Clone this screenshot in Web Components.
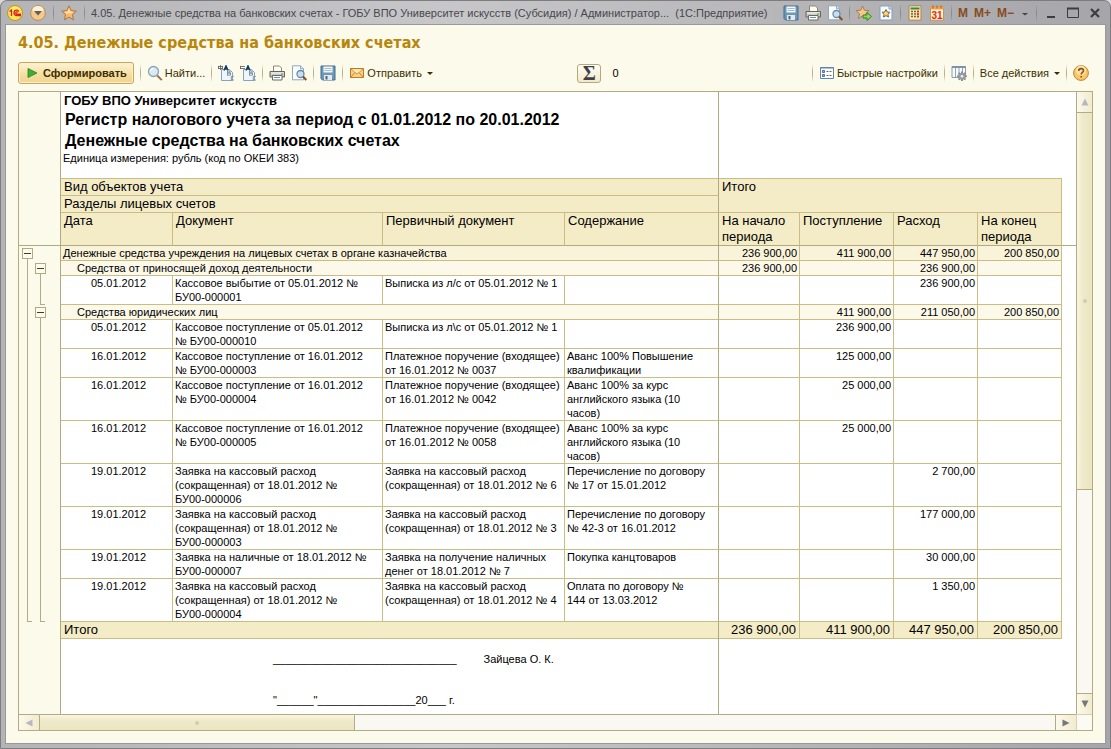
<!DOCTYPE html>
<html lang="ru">
<head>
<meta charset="utf-8">
<title>4.05. Денежные средства на банковских счетах</title>
<style>
  html, body { margin: 0; min-height: 100%; }
  body { background: #d8d8d8; font-family: "Liberation Sans", Arial, sans-serif; font-size: 11px; color: #000; }
</style>
</head>
<body>
<app-window>
  <title-bar slot="title">4.05. Денежные средства на банковских счетах - ГОБУ ВПО Университет искусств (Субсидия) / Администратор...&nbsp; (1С:Предприятие)</title-bar>
  <report-heading>4.05. Денежные средства на банковских счетах</report-heading>
  <report-toolbar></report-toolbar>
  <report-sheet></report-sheet>
</app-window>

<script>
const define = (name, html, setup) => {
  const template = document.createElement('template');
  template.innerHTML = html;
  customElements.define(name, class extends HTMLElement {
    constructor() {
      super();
      this.attachShadow({ mode: 'open' }).append(template.content.cloneNode(true));
    }
    connectedCallback() {
      if (setup && !this.ready) { this.ready = true; setup(this, this.shadowRoot); }
    }
  });
};

/* Icons, each on a 16 x 16 grid */
const ICONS = {
  logo: '<circle cx="8" cy="8" r="7.5" fill="#ffe34d" stroke="#c8921e"/><circle cx="8" cy="7" r="5.5" fill="#fff27a" opacity=".7"/><path d="M2.5 6.5L4.5 5v6M12 6.5C11 4.500 7 4.600 7 8c0 2 1.500 2.500 3 2.500h4M11 7.400c-.8-1-2.300-.6-2.300.7 0 .8.6 1 1.300 1h4" fill="none" stroke="#d8201c" stroke-width="1.300"/>',
  menu: '<circle cx="8" cy="8" r="7.400" fill="#f5c98a" stroke="#b98b5c"/><ellipse cx="8" cy="4.500" rx="5.500" ry="3.500" fill="#fff1d4"/><path d="M4 6h8l-4 4.500z" fill="#5d5d62"/>',
  star: '<path d="M8 .8l2.100 4.800 5.200.5-3.900 3.500 1.100 5.200L8 12.100l-4.500 2.700 1.100-5.200L.7 6.100l5.200-.5z" fill="#fbb86a" stroke="#a9764c"/><path d="M8 3l1.300 3.500 3 .3-2.300 2L8 8 5 9 4 6.800l2.700-.3z" fill="#ffe0a0"/>',
  save: '<path d="M1 1h14v14H2.500L1 13.500z" fill="#6f98b5" stroke="#436d8d"/><path d="M3.500 1.500h9v6h-9z" fill="#f4f8fa"/><path d="M4.500 3.500h7M4.500 5.500h7" stroke="#a9bccb"/><path d="M4 10h8v5H4z" fill="#e3e9ed"/><path d="M5.500 11h2v3.500h-2z" fill="#3f6884"/>',
  print: '<path d="M4.500 1h6l2 2v4h-8z" fill="#fffdf2" stroke="#8d8979"/><path d="M1 6.500h14.500v5.500H1z" fill="#c9c8bd" stroke="#66645f"/><path d="M2 8h12.500" stroke="#fff"/><path d="M3.500 10.500h9.500v4.500H3.500z" fill="#fff" stroke="#6c6a64"/><path d="M5 12.500h6" stroke="#5f92c8"/><path d="M12 8.500h2v1h-2z" fill="#48a03c"/>',
  preview: '<path d="M1.500.8h8l3 3v11h-11z" fill="#fbfdff" stroke="#8ba9c4"/><path d="M9.500.8v3h3" fill="#dbe7f2" stroke="#8ba9c4"/><circle cx="9.500" cy="9" r="3.500" fill="#c7dff0" stroke="#6b89a5" stroke-width="1.300"/><path d="M12 11.500l3.300 3.500" stroke="#8a4d20" stroke-width="2"/>',
  staradd: '<path d="M6.500 1l1.900 4.200 4.500.5-3.400 3.100 1 4.600-4-2.400-4 2.400 1-4.600L.2 5.700l4.500-.5z" fill="#f9c78a" stroke="#a67a58"/><path d="M7 10h4V7.500l4.500 4-4.500 4V13H7z" fill="#8edb51" stroke="#33852a"/>',
  docstar: '<path d="M2 1h9.500L14 3.500V15H2z" fill="#f7faff" stroke="#7fa0c4"/><path d="M11 1v3h3" fill="#dfe8f3" stroke="#7fa0c4"/><path d="M8 4.500l1.200 2.500 2.800.3-2.100 2 .6 2.700L8 10.600 5.500 12l.6-2.700-2.100-2 2.800-.3z" fill="#ffd873" stroke="#83603c"/>',
  calc: '<path d="M2 .8h12v14.400H2z" fill="#fbe6b4" stroke="#a88853"/><path d="M3.500 2.500h9v2h-9z" fill="#338c38"/><path d="M4 6.500h2m1 0h2m1 0h2M4 9h2m1 0h2m1 0h2M4 11.500h2m1 0h2m1 0h2" stroke="#7c6640" stroke-width="1.300"/><path d="M10 6.500h2m-2 2.500h2m-2 2.500h2" stroke="#d33a26" stroke-width="1.300"/>',
  calendar: '<path d="M1.500 1.500h13v13.700h-13z" fill="#fff4d2" stroke="#c9924e"/><path d="M1.500 1.500h13v3h-13z" fill="#eba55a"/><path d="M4 .5v3M8 .5v3M12 .5v3" stroke="#9d633b"/><text x="8" y="13.500" font-size="10" text-anchor="middle" font-family="Liberation Sans, sans-serif" fill="#e02a16">31</text>',
  down: '<path d="M3 8h10L8 12z" fill="#454545"/>',
  min: '<path d="M4 11h8v2H4z" fill="#3d3d3d"/>',
  max: '<path d="M2.500 3.500h11v9h-11z" fill="none" stroke="#3d3d3d"/><path d="M2 3.500h12" stroke="#3d3d3d" stroke-width="2"/>',
  close: '<path d="M4 4l8 8M12 4l-8 8" stroke="#3d3d3d" stroke-width="2.200"/>',
  play: '<path d="M3 3.500L12 8l-9 4.500z" fill="#3fae32" stroke="#27801f" stroke-width=".8"/>',
  find: '<circle cx="6.500" cy="6.500" r="5" fill="#d5e9f7" stroke="#8fa2b3" stroke-width="1.300"/><path d="M3.500 6c.4-1.500 1.500-2.300 3-2.300" stroke="#fff" fill="none" stroke-width="1.300"/><path d="M10.200 10.500l4.600 4.600" stroke="#a0714c" stroke-width="2"/>',
  expand: '<path d="M3.500 4.500h8l3 3v8h-11z" fill="#eef6fc" stroke="#86a2bd"/><path d="M0 1.500h5M0 3.500h5M.5 1v3M2.500 0v5M4.500 1v3" stroke="#5a5a5a" stroke-width=".8"/><path d="M6 5.500L8 .8l2 4.700M6.800 3.800h2.400" fill="none" stroke="#123c62" stroke-width="1.400"/><path d="M9.500 5.500v5m0-4.500h2.500v2H9.500m0 0h3v2.200h-3M15.800 11.500h-2.500v3.500h2.500" fill="none" stroke="#7f93a6"/>',
  collapse: '<path d="M3.500 4.500h8l3 3v8h-11z" fill="#eef6fc" stroke="#86a2bd"/><path d="M0 1.500h5M0 3.500h5M.5 1v3" stroke="#5a5a5a" stroke-width=".8"/><path d="M6 5.500L8 .8l2 4.700M6.800 3.800h2.400" fill="none" stroke="#123c62" stroke-width="1.400"/><path d="M9.500 5.500v5m0-4.500h2.500v2H9.500m0 0h3v2.200h-3M15.800 11.500h-2.500v3.500h2.500" fill="none" stroke="#7f93a6"/>',
  mail: '<path d="M1.500 3.500h13v9h-13z" fill="#fbd080" stroke="#bd7a2a"/><path d="M1.500 3.500L8 9l6.500-5.500M1.500 12.500l4.500-5M14.500 12.500l-4.500-5" fill="none" stroke="#c8842f"/><path d="M3 4.500h10L8 8.400z" fill="#fff0bd"/>',
  settings: '<path d="M1.500 2.500h13v11h-13z" fill="#fff" stroke="#6283ac"/><path d="M1 3h14" stroke="#6283ac"/><path d="M3.500 5.500h2v2h-2zM3.500 9.500h2v2h-2z" fill="#95b5dc" stroke="#4e6d98"/><path d="M7.500 6.500h2m1 0h2m-5 4h2m1 0h2" stroke="#5a6576"/>',
  gear: '<path d="M1 1.500h13.500v11H1z" fill="#f7fafc" stroke="#8b9cad"/><path d="M1 2h13.500" stroke="#7d93a7" stroke-width="2"/><path d="M4.500 3v9M8 3v9M11.500 3v9" stroke="#8fa5b8"/><path d="M11 6.500v9.500M6.200 11.200h9.600M7.600 7.900l6.800 6.700M14.400 7.900l-6.800 6.700" stroke="#7e8389" stroke-width="1.800"/><circle cx="11" cy="11.200" r="3.500" fill="#979ca2"/><circle cx="11" cy="11.200" r="1.300" fill="#f4f3e6"/>',
  help: '<circle cx="8" cy="8" r="7.400" fill="#fcc566" stroke="#b7863f"/><circle cx="8" cy="5.500" r="5" fill="#ffe9b5" opacity=".8"/><path d="M5.700 6c0-1.500 1-2.400 2.400-2.400s2.400.9 2.400 2.100c0 1.700-2.300 1.700-2.300 3.800M8.200 11v1.600" fill="none" stroke="#8b521c" stroke-width="1.600"/>'
};

define('tool-icon', `
  <style>
    :host { display: block; flex: none; width: 16px; height: 16px; }
    svg { display: block; width: 100%; height: 100%; }
  </style>
  <svg viewBox="0 0 16 16" aria-hidden="true"></svg>`,
  (el, root) => { root.querySelector('svg').innerHTML = ICONS[el.getAttribute('name')]; });

define('tool-separator', `
  <style>
    :host { display: block; flex: none; width: 1px; height: 18px;
      background: linear-gradient(transparent, var(--separator, #b9b28f) 40%, var(--separator, #b9b28f) 60%, transparent); }
  </style>`);

define('app-window', `
  <style>
    :host { display: flex; flex-direction: column; box-sizing: border-box; min-height: 100vh;
      padding: 0 5px 5px; border: 1px solid #7d7d7f; border-radius: 7px 7px 0 0;
      background: linear-gradient(90deg, #b4b4b6, #c7c7c9 40%, #a6a6aa); }
    main { flex: 1; display: flex; flex-direction: column; min-width: 0;
      padding: 0 12px 12px; background: #fcfaeb; box-shadow: 0 0 0 1px #99999b; }
  </style>
  <slot name="title"></slot>
  <main><slot></slot></main>`);

define('title-bar', `
  <style>
    :host { display: flex; align-items: center; height: 24px; padding: 0 2px 0 1px; color: #47474b; --separator: #8c8c90; }
    .group { display: flex; align-items: center; flex: none; gap: 6px; }
    .lead { gap: 7px; }
    .text { flex: 1; min-width: 0; margin: 0 8px 0 6px; font: 11px/16px "Liberation Sans", sans-serif; white-space: nowrap; overflow: hidden; }
    button { display: block; flex: none; padding: 0; border: 0; background: none; color: #884a20; font: bold 12px/16px "Liberation Sans", sans-serif; }
    .more, .more tool-icon { width: 10px; }
  </style>
  <div class="group lead">
    <button aria-label="Меню 1С"><tool-icon name="logo"></tool-icon></button>
    <button aria-label="Главное меню"><tool-icon name="menu"></tool-icon></button>
    <tool-separator></tool-separator>
    <button aria-label="Избранное"><tool-icon name="star"></tool-icon></button>
    <tool-separator></tool-separator>
  </div>
  <div class="text"><slot></slot></div>
  <div class="group">
    <button aria-label="Сохранить"><tool-icon name="save"></tool-icon></button>
    <button aria-label="Печать"><tool-icon name="print"></tool-icon></button>
    <button aria-label="Просмотр"><tool-icon name="preview"></tool-icon></button>
    <tool-separator></tool-separator>
    <button aria-label="Добавить в избранное"><tool-icon name="staradd"></tool-icon></button>
    <button aria-label="Получить ссылку"><tool-icon name="docstar"></tool-icon></button>
    <tool-separator></tool-separator>
    <button aria-label="Калькулятор"><tool-icon name="calc"></tool-icon></button>
    <button aria-label="Календарь"><tool-icon name="calendar"></tool-icon></button>
    <tool-separator></tool-separator>
    <button>M</button>
    <button>M+</button>
    <button>M−</button>
    <button class="more" aria-label="Ещё"><tool-icon name="down"></tool-icon></button>
    <tool-separator></tool-separator>
    <button aria-label="Свернуть"><tool-icon name="min"></tool-icon></button>
    <button aria-label="Развернуть"><tool-icon name="max"></tool-icon></button>
    <button aria-label="Закрыть"><tool-icon name="close"></tool-icon></button>
  </div>`);

define('report-heading', `
  <style>
    :host { display: block; padding: 6px 0 7px; }
    h1 { margin: 0; font: bold 16px/24px "DejaVu Sans Condensed", "DejaVu Sans", sans-serif; color: #b8860b; }
  </style>
  <h1><slot></slot></h1>`);

define('report-toolbar', `
  <style>
    :host { display: flex; align-items: center; justify-content: space-between; height: 22px; padding-right: 4px; margin-bottom: 7px; }
    .group { display: flex; align-items: center; flex: none; gap: 6px; }
    button { display: flex; align-items: center; gap: 2px; padding: 0; border: 0; background: none; color: #3b2f00;
      font: 11px/16px "Liberation Sans", sans-serif; white-space: nowrap; }
    .primary { height: 22px; padding: 0 6px; border: 1px solid #c9a55a; border-radius: 3px; font-weight: bold;
      background: linear-gradient(#fdf3d3, #f5dda0 60%, #f0d592); box-shadow: inset 0 0 0 1px #fdf0cb; }
    .arrow::after { content: ""; margin-left: 3px; border: 3px solid transparent; border-top-color: #3b2f00; border-bottom-width: 0; }
    .sum { width: 90px; gap: 11px; }
    .sigma { justify-content: center; width: 24px; height: 19px; border: 1px solid #b5a97c; border-radius: 3px;
      background: linear-gradient(#fffef7, #f1e9c8); color: #3f3f48; font: bold 20px/18px "Liberation Serif", serif; }
  </style>
  <div class="group">
    <button class="primary"><tool-icon name="play"></tool-icon>Сформировать</button>
    <tool-separator></tool-separator>
    <button><tool-icon name="find"></tool-icon>Найти...</button>
    <tool-separator></tool-separator>
    <button aria-label="Развернуть группы"><tool-icon name="expand"></tool-icon></button>
    <button aria-label="Свернуть группы"><tool-icon name="collapse"></tool-icon></button>
    <tool-separator></tool-separator>
    <button aria-label="Печать"><tool-icon name="print"></tool-icon></button>
    <button aria-label="Просмотр"><tool-icon name="preview"></tool-icon></button>
    <tool-separator></tool-separator>
    <button aria-label="Сохранить"><tool-icon name="save"></tool-icon></button>
    <tool-separator></tool-separator>
    <button class="arrow"><tool-icon name="mail"></tool-icon>Отправить</button>
  </div>
  <div class="group sum">
    <button class="sigma">Σ</button>
    <output>0</output>
  </div>
  <div class="group">
    <tool-separator></tool-separator>
    <button><tool-icon name="settings"></tool-icon>Быстрые настройки</button>
    <tool-separator></tool-separator>
    <button aria-label="Настройки"><tool-icon name="gear"></tool-icon></button>
    <tool-separator></tool-separator>
    <button class="arrow">Все действия</button>
    <tool-separator></tool-separator>
    <button aria-label="Справка"><tool-icon name="help"></tool-icon></button>
  </div>`);

define('scroll-bar', `
  <style>
    :host { display: flex; min-width: 0; min-height: 0; background: #f9f8f3; --line: #b3ab82; }
    button { flex: none; display: grid; place-items: center; padding: 0; border: 0 solid var(--line); background: linear-gradient(90deg, #fcf9ea, #f2ebcf); }
    svg { display: block; width: 8px; height: 8px; fill: #77787c; }
    .dim svg { fill: #b7b8bd; }
    .track { flex: 1; display: flex; min-width: 0; min-height: 0; }
    .thumb { flex: none; display: grid; place-items: center; box-sizing: border-box; border: 0 solid var(--line); }
    .thumb::after { content: ""; width: 4px; height: 4px; border-radius: 2px; background: #cfcbb4; }
    :host([vertical]) { flex-direction: column; width: 15px; border-left: 1px solid var(--line); }
    :host([vertical]) button { height: 21px; box-sizing: border-box; }
    :host([vertical]) .track { flex-direction: column; }
    :host([vertical]) .thumb { height: 65%; border-bottom-width: 1px; background: linear-gradient(90deg, #faf5e0, #eee9c9 40%, #ece5c2); }
    :host([vertical]) .first { border-bottom-width: 1px; }
    :host([vertical]) .last { border-top-width: 1px; }
    :host([vertical]) svg { transform: rotate(90deg); }
    :host(:not([vertical])) { height: 15px; border-top: 1px solid var(--line); }
    :host(:not([vertical])) button { width: 21px; }
    :host(:not([vertical])) .thumb { width: 31%; border-right-width: 1px; background: linear-gradient(#faf5e0, #eee9c9 40%, #ece5c2); }
    :host(:not([vertical])) .first { border-right-width: 1px; }
    :host(:not([vertical])) .last { border-left-width: 1px; }
  </style>
  <button class="first dim" aria-label="Назад"><svg viewBox="0 0 8 8"><path d="M7.500.5v7L.5 4z"/></svg></button>
  <div class="track"><div class="thumb"></div></div>
  <button class="last" aria-label="Вперёд"><svg viewBox="0 0 8 8"><path d="M.5.5v7L7.500 4z"/></svg></button>`);

define('outline-toggle', `
  <style>
    :host { display: block; width: 11px; height: 11px; white-space: normal; }
    button { display: grid; place-items: center; box-sizing: border-box; width: 11px; height: 11px; padding: 0;
      border: 1px solid #b3a982; background: #fdfbf0; }
    button::after { content: ""; width: 7px; height: 1px; background: #4a3c10; }
  </style>
  <button aria-label="Свернуть группу"></button>`);

/* Report rows: [level, lines, texts, sums, closed outline brackets] */
const ROWS = [
  [1, 1, ['Денежные средства учреждения на лицевых счетах в органе казначейства'], ['236 900,00', '411 900,00', '447 950,00', '200 850,00']],
  [2, 1, ['Средства от приносящей доход деятельности'], ['236 900,00', '', '236 900,00', '']],
  [3, 2, ['05.01.2012', 'Кассовое выбытие от 05.01.2012 №\nБУ00-000001', 'Выписка из л/с от 05.01.2012 № 1', ''], ['', '', '236 900,00', ''], 'end2'],
  [2, 1, ['Средства юридических лиц'], ['', '411 900,00', '211 050,00', '200 850,00']],
  [3, 2, ['05.01.2012', 'Кассовое поступление от 05.01.2012\n№ БУ00-000010', 'Выписка из л\\с от 05.01.2012 № 1', ''], ['', '236 900,00', '', '']],
  [3, 2, ['16.01.2012', 'Кассовое поступление от 16.01.2012\n№ БУ00-000003', 'Платежное поручение (входящее)\nот 16.01.2012 № 0037', 'Аванс 100% Повышение\nквалификации'], ['', '125 000,00', '', '']],
  [3, 3, ['16.01.2012', 'Кассовое поступление от 16.01.2012\n№ БУ00-000004', 'Платежное поручение (входящее)\nот 16.01.2012 № 0042', 'Аванс 100% за курс\nанглийского языка (10\nчасов)'], ['', '25 000,00', '', '']],
  [3, 3, ['16.01.2012', 'Кассовое поступление от 16.01.2012\n№ БУ00-000005', 'Платежное поручение (входящее)\nот 16.01.2012 № 0058', 'Аванс 100% за курс\nанглийского языка (10\nчасов)'], ['', '25 000,00', '', '']],
  [3, 3, ['19.01.2012', 'Заявка на кассовый расход\n(сокращенная) от 18.01.2012 №\nБУ00-000006', 'Заявка на кассовый расход\n(сокращенная) от 18.01.2012 № 6', 'Перечисление по договору\n№ 17 от 15.01.2012'], ['', '', '2 700,00', '']],
  [3, 3, ['19.01.2012', 'Заявка на кассовый расход\n(сокращенная) от 18.01.2012 №\nБУ00-000003', 'Заявка на кассовый расход\n(сокращенная) от 18.01.2012 № 3', 'Перечисление по договору\n№ 42-3 от 16.01.2012'], ['', '', '177 000,00', '']],
  [3, 2, ['19.01.2012', 'Заявка на наличные от 18.01.2012 №\nБУ00-000007', 'Заявка на получение наличных\nденег от 18.01.2012 № 7', 'Покупка канцтоваров'], ['', '', '30 000,00', '']],
  [3, 3, ['19.01.2012', 'Заявка на кассовый расход\n(сокращенная) от 18.01.2012 №\nБУ00-000004', 'Заявка на кассовый расход\n(сокращенная) от 18.01.2012 № 4', 'Оплата по договору №\n144 от 13.03.2012'], ['', '', '1 350,00', ''], 'end1 end2']
];

define('report-table', `
  <style>
    :host { display: flex; min-width: 0; --grid: #c9bd84; --edge: #b0aa80; --tree: #b3ab82; }
    table { width: 100%; table-layout: fixed; border-collapse: separate; border-spacing: 0; font-size: 11px; line-height: 14px; }
    td, th { box-sizing: border-box; padding: 0 0 0 2px; border: 0 solid var(--grid); border-width: 0 1px 1px 0;
      text-align: left; vertical-align: top; font-weight: normal; overflow: hidden; }
    tbody td { white-space: pre-line; }
    .gutter { padding: 0; background-color: #fcfaeb; border-right-color: var(--edge); border-bottom-width: 0; overflow: visible; }
    .side { border-right-color: var(--edge); }
    .rest { border: 0; }
    .open { border-right-width: 0; }
    .intro { height: 87px; }
    .intro p { margin: 0; }
    .intro .org { padding-left: 1px; font: bold 13px/17px "Liberation Sans", sans-serif; }
    .intro h2 { margin: 0; padding-left: 2px; font: bold 16px/21px "Liberation Sans", sans-serif; }
    thead th { padding-left: 3px; background: #f4ecc7; font-size: 13px; line-height: 16px; }
    thead .low { border-bottom-color: var(--edge); height: 33px; }
    thead .gutter, thead .rest { border-bottom: 1px solid var(--edge); }
    .level1 td { background-color: #f9f3da; }
    .level2 td { background-color: #fcf8ea; }
    tbody .gutter, tfoot .gutter { background-color: #fcfaeb; }
    tbody .rest { background: none; }
    .level2 .name { padding-left: 16px; }
    .level3 .name { padding-left: 30px; }
    .lines1 { height: 15px; } .lines2 { height: 29px; } .lines3 { height: 43px; }
    .num { padding: 0 2px 0 0; text-align: right; white-space: nowrap; }
    .level1 .gutter { padding: 2px 0 0 3px; background: linear-gradient(var(--tree), var(--tree)) 8px 8px / 1px 100% no-repeat #fcfaeb; }
    .level2 .gutter { padding: 2px 0 0 16px;
      background: linear-gradient(var(--tree), var(--tree)) 8px 0 / 1px 100% no-repeat,
        linear-gradient(var(--tree), var(--tree)) 21px 8px / 1px 100% no-repeat #fcfaeb; }
    .level3 .gutter {
      background: linear-gradient(var(--tree), var(--tree)) 8px 0 / 1px 100% no-repeat,
        linear-gradient(var(--tree), var(--tree)) 21px 0 / 1px 100% no-repeat,
        linear-gradient(var(--tree), var(--tree)) 8px 100% / var(--foot1, 0px) 1px no-repeat,
        linear-gradient(var(--tree), var(--tree)) 21px 100% / var(--foot2, 0px) 1px no-repeat #fcfaeb; }
    .end1 { --foot1: 5px; }
    .end2 { --foot2: 5px; }
    .total { height: 17px; }
    .total td, .total th { background: #f4ecc7; font-size: 13px; line-height: 16px; }
    .total th { padding-left: 3px; }
    .total .num { padding-right: 3px; }
    .total .gutter { background: #fcfaeb; }
    .total .rest { background: none; }
    .sign td { border-bottom: 0; }
    .sign .area { padding: 13px 0 7px 212px; white-space: pre; }
    .sign p { display: flex; gap: 27px; margin: 0 0 27px; }
    .sign p + p { margin: 0; }
  </style>
  <table>
    <colgroup>
      <col style="width:42px"><col style="width:112px"><col style="width:210px"><col style="width:182px"><col style="width:154px">
      <col style="width:81px"><col style="width:94px"><col style="width:84px"><col style="width:84px"><col>
    </colgroup>
    <thead>
      <tr class="intro">
        <td class="gutter" rowspan="4"></td>
        <td class="side" colspan="4">
          <p class="org">ГОБУ ВПО Университет искусств</p>
          <h2>Регистр налогового учета за период с 01.01.2012 по 20.01.2012</h2>
          <h2>Денежные средства на банковских счетах</h2>
          <p>Единица измерения: рубль (код по ОКЕИ 383)</p>
        </td>
        <td class="open" colspan="4"></td>
        <td class="rest" rowspan="4"></td>
      </tr>
      <tr class="total"><th class="side" colspan="4">Вид объектов учета</th><th colspan="4" rowspan="2">Итого</th></tr>
      <tr class="total"><th class="side" colspan="4">Разделы лицевых счетов</th></tr>
      <tr>
        <th class="low">Дата</th><th class="low">Документ</th><th class="low">Первичный документ</th><th class="low side">Содержание</th>
        <th class="low">На начало периода</th><th class="low">Поступление</th><th class="low">Расход</th><th class="low">На конец периода</th>
      </tr>
    </thead>
    <tbody></tbody>
    <tfoot>
      <tr class="total">
        <td class="gutter"></td><th class="side" colspan="4">Итого</th>
        <td class="num">236 900,00</td><td class="num">411 900,00</td><td class="num">447 950,00</td><td class="num">200 850,00</td><td class="rest"></td>
      </tr>
      <tr class="sign">
        <td class="gutter"></td>
        <td class="area side" colspan="4"><p><span>______________________________</span><span>Зайцева О. К.</span></p><p>"______"________________20___ г.</p></td>
        <td class="rest" colspan="5"></td>
      </tr>
    </tfoot>
  </table>`,
  (el, root) => {
    const body = root.querySelector('tbody');
    const cell = (row, cls, text = '') => {
      const td = row.insertCell();
      td.className = cls;
      td.textContent = text;
      return td;
    };
    for (const [level, lines, texts, sums, ends = ''] of ROWS) {
      const row = body.insertRow();
      row.className = `level${level} lines${lines} ${ends}`;
      const gutter = cell(row, 'gutter');
      if (level < 3) gutter.append(document.createElement('outline-toggle'));
      texts.forEach((text, i) => {
        const td = cell(row, (i ? '' : 'name ') + (i === texts.length - 1 ? 'side' : ''), text);
        if (texts.length === 1) td.colSpan = 4;
      });
      sums.forEach(sum => cell(row, 'num', sum));
      cell(row, 'rest');
    }
  });

define('report-sheet', `
  <style>
    :host { flex: 1; display: grid; grid-template: 1fr auto / minmax(0, 1fr) auto; border: 1px solid #b3ab82; background: #fff; }
    .corner { border: 1px solid #d6d0b4; border-width: 1px 0 0 1px; background: #fbfaf3; }
  </style>
  <report-table></report-table>
  <scroll-bar vertical></scroll-bar>
  <scroll-bar></scroll-bar>
  <div class="corner"></div>`);
</script>
</body>
</html>
